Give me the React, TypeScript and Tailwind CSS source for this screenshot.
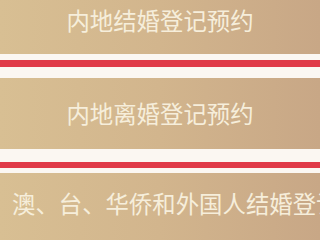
export default function App() {
  const font = { fontFamily: '"Noto Sans CJK SC", "Noto Sans", sans-serif' };
  const band =
    "w-full flex items-center overflow-hidden whitespace-nowrap bg-gradient-to-r from-[#d8bf93] via-[#d2b58d] to-[#c8a786] text-[#f6eedb] text-[23.4px] leading-none";
  return (
    <div className="w-[320px] h-[240px] overflow-hidden bg-white flex flex-col" style={font}>
      <div className={`${band} h-[54px] justify-center pb-[12px] shrink-0`}>
        内地结婚登记预约
      </div>
      <div className="w-full flex flex-col shrink-0">
        <div className="h-[6px] bg-[#fbf7f2]" />
        <div className="h-[7px] bg-[#e03a48]" />
        <div className="h-[11px] bg-[#fbf7f2]" />
      </div>
      <div className={`${band} h-[71px] justify-center shrink-0`}>
        内地离婚登记预约
      </div>
      <div className="w-full flex flex-col shrink-0">
        <div className="h-[13px] bg-[#fbf7f2]" />
        <div className="h-[6px] bg-[#e03a48]" />
        <div className="h-[5px] bg-[#fbf7f2]" />
      </div>
      <div className={`${band} h-[71px] justify-start pl-[12px] pb-[10px] shrink-0`}>
        澳、台、华侨和外国人结婚登记预约
      </div>
    </div>
  );
}
